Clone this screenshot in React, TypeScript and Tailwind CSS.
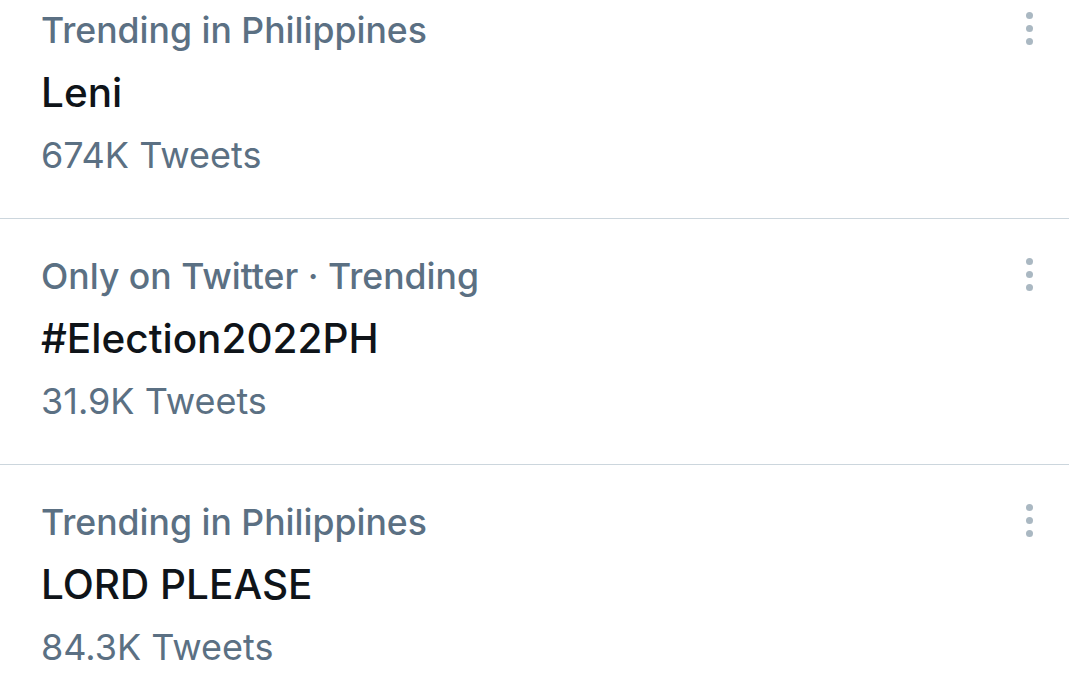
import { Fragment } from "react";

const trends = [
  { context: "Trending in Philippines", name: "Leni", count: "674K Tweets" },
  { context: "Only on Twitter · Trending", name: "#Election2022PH", count: "31.9K Tweets" },
  { context: "Trending in Philippines", name: "LORD PLEASE", count: "84.3K Tweets" },
];

function MoreDots() {
  return (
    <div className="flex flex-col items-center gap-[6px] pt-[12px]">
      <span className="w-[7px] h-[7px] rounded-full bg-[#aab8c2]" />
      <span className="w-[7px] h-[7px] rounded-full bg-[#aab8c2]" />
      <span className="w-[7px] h-[7px] rounded-full bg-[#aab8c2]" />
    </div>
  );
}

export default function App() {
  return (
    <div className="w-[1069px] h-[699px] bg-white overflow-hidden" style={{ fontFamily: "Inter, 'Noto Sans', sans-serif" }}>
      <div className="-mt-[27px]">
        {trends.map((t, i) => (
          <Fragment key={i}>
            {i > 0 && <div className="h-px bg-[#ccd6dd]" />}
            <div className="flex pl-[41px] pr-[36px] pt-[27px] pb-[32px]">
              <div className="flex-1">
                <div className="text-[35.6px] leading-[62px] font-medium text-[#5b7083]">{t.context}</div>
                <div className="text-[40.5px] leading-[62px] font-medium text-[#0f1419]">{t.name}</div>
                <div className="text-[36px] leading-[62px] text-[#5b7083]">{t.count}</div>
              </div>
              <MoreDots />
            </div>
          </Fragment>
        ))}
      </div>
    </div>
  );
}
